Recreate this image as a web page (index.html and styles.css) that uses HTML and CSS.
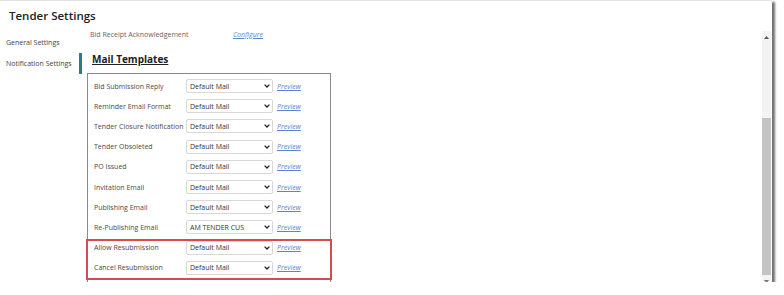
FILE: index.html
```html
<!DOCTYPE html>
<html lang="en">
<head>
    <meta charset="UTF-8">
    <title>Tender Settings</title>
    <link rel="stylesheet" href="styles.css">
</head>
<body>
    <div class="frame">
        <h1 class="title">Tender Settings</h1>
        <div class="main">
            <div class="sidebar">
                <div class="nav-item">General Settings</div>
                <div class="nav-item active">Notification Settings</div>
            </div>

            <div class="pane">
                <div class="receipt">
                    <span class="receipt-label">Bid Receipt Acknowledgement</span>
                    <a class="link" href="#">Configure</a>
                </div>

                <h2 class="section-title">Mail Templates</h2>

                <div class="templates">
                    <div class="row">
                        <span class="label">Bid Submission Reply</span>
                        <div class="select"><span>Default Mail</span><svg width="6" height="4" viewBox="0 0 6 4"><path d="M0.6 0.6 L3 3 L5.4 0.6" fill="none" stroke="#222" stroke-width="1.3"/></svg></div>
                        <a class="link" href="#">Preview</a>
                    </div>
                    <div class="row">
                        <span class="label">Reminder Email Format</span>
                        <div class="select"><span>Default Mail</span><svg width="6" height="4" viewBox="0 0 6 4"><path d="M0.6 0.6 L3 3 L5.4 0.6" fill="none" stroke="#222" stroke-width="1.3"/></svg></div>
                        <a class="link" href="#">Preview</a>
                    </div>
                    <div class="row">
                        <span class="label">Tender Closure Notification</span>
                        <div class="select"><span>Default Mail</span><svg width="6" height="4" viewBox="0 0 6 4"><path d="M0.6 0.6 L3 3 L5.4 0.6" fill="none" stroke="#222" stroke-width="1.3"/></svg></div>
                        <a class="link" href="#">Preview</a>
                    </div>
                    <div class="row">
                        <span class="label">Tender Obsoleted</span>
                        <div class="select"><span>Default Mail</span><svg width="6" height="4" viewBox="0 0 6 4"><path d="M0.6 0.6 L3 3 L5.4 0.6" fill="none" stroke="#222" stroke-width="1.3"/></svg></div>
                        <a class="link" href="#">Preview</a>
                    </div>
                    <div class="row">
                        <span class="label">PO Issued</span>
                        <div class="select"><span>Default Mail</span><svg width="6" height="4" viewBox="0 0 6 4"><path d="M0.6 0.6 L3 3 L5.4 0.6" fill="none" stroke="#222" stroke-width="1.3"/></svg></div>
                        <a class="link" href="#">Preview</a>
                    </div>
                    <div class="row">
                        <span class="label">Invitation Email</span>
                        <div class="select"><span>Default Mail</span><svg width="6" height="4" viewBox="0 0 6 4"><path d="M0.6 0.6 L3 3 L5.4 0.6" fill="none" stroke="#222" stroke-width="1.3"/></svg></div>
                        <a class="link" href="#">Preview</a>
                    </div>
                    <div class="row">
                        <span class="label">Publishing Email</span>
                        <div class="select"><span>Default Mail</span><svg width="6" height="4" viewBox="0 0 6 4"><path d="M0.6 0.6 L3 3 L5.4 0.6" fill="none" stroke="#222" stroke-width="1.3"/></svg></div>
                        <a class="link" href="#">Preview</a>
                    </div>
                    <div class="row">
                        <span class="label">Re-Publishing Email</span>
                        <div class="select"><span>AM TENDER CUS</span><svg width="6" height="4" viewBox="0 0 6 4"><path d="M0.6 0.6 L3 3 L5.4 0.6" fill="none" stroke="#222" stroke-width="1.3"/></svg></div>
                        <a class="link" href="#">Preview</a>
                    </div>

                    <!-- rows marked in red on the screenshot -->
                    <div class="highlight">
                        <div class="row">
                            <span class="label">Allow Resubmission</span>
                            <div class="select"><span>Default Mail</span><svg width="6" height="4" viewBox="0 0 6 4"><path d="M0.6 0.6 L3 3 L5.4 0.6" fill="none" stroke="#222" stroke-width="1.3"/></svg></div>
                            <a class="link" href="#">Preview</a>
                        </div>
                        <div class="row">
                            <span class="label">Cancel Resubmission</span>
                            <div class="select"><span>Default Mail</span><svg width="6" height="4" viewBox="0 0 6 4"><path d="M0.6 0.6 L3 3 L5.4 0.6" fill="none" stroke="#222" stroke-width="1.3"/></svg></div>
                            <a class="link" href="#">Preview</a>
                        </div>
                    </div>
                    <div class="row"></div>
                </div>
            </div>

            <div class="scrollbar">
                <div class="sb-arrow"><svg width="5" height="3" viewBox="0 0 5 3"><polygon points="0,3 2.5,0 5,3" fill="#555"/></svg></div>
                <div class="sb-track"><div class="sb-thumb"></div></div>
                <div class="sb-arrow"><svg width="5" height="3" viewBox="0 0 5 3"><polygon points="0,0 2.5,3 5,0" fill="#777"/></svg></div>
            </div>
        </div>
    </div>
</body>
</html>
```

FILE: styles.css
```css
body {
    margin: 0;
    background-color: #fff;
    font-family: "Open Sans", "Liberation Sans", sans-serif;
    color: #333;
}

.frame {
    width: 772px;
    height: 282px;
    border-top: 1px solid #e2e2e2;
    box-sizing: border-box;
    background-color: #fff;
    box-shadow: 3px 2px 2px rgba(0, 0, 0, 0.55);
    overflow: hidden;
    display: flex;
    flex-direction: column;
}

.title {
    margin: 0;
    height: 30px;
    box-sizing: border-box;
    padding: 8px 0 0 9px;
    font-size: 11.5px;
    line-height: 14px;
    font-weight: 600;
    color: #222;
    flex: none;
}

.main {
    flex: 1;
    display: flex;
    min-height: 0;
}

/* left menu */
.sidebar {
    width: 82px;
    flex: none;
    padding-top: 1px;
}

.nav-item {
    height: 21px;
    line-height: 21px;
    padding-left: 6px;
    font-size: 7px;
    color: #444;
    white-space: nowrap;
}

.nav-item.active {
    border-right: 3px solid #2d8077;
}

/* scrolled content */
.pane {
    flex: 1;
    overflow: hidden;
    min-width: 0;
}

.receipt {
    display: flex;
    align-items: center;
    height: 12px;
    margin-top: -3px;
    padding-left: 8px;
    font-size: 7px;
    color: #666;
}

.receipt-label {
    width: 139px;
}

.section-title {
    margin: 11px 0 0 10px;
    font-size: 10px;
    line-height: 16px;
    font-weight: 700;
    color: #222;
    text-decoration: underline;
    text-underline-offset: 1px;
}

.templates {
    width: 244px;
    box-sizing: border-box;
    margin: 6px 0 0 5px;
    padding-top: 2px;
    border: 1px solid #8a8a8a;
    border-bottom: none;
}

.row {
    display: flex;
    align-items: center;
    height: 20.2px;
    padding-left: 6px;
}

.label {
    width: 92px;
    flex: none;
    font-size: 7px;
    color: #4a4a4a;
    white-space: nowrap;
}

.select {
    width: 87px;
    height: 14px;
    box-sizing: border-box;
    border: 1px solid #d8d8d8;
    border-radius: 2px;
    display: flex;
    align-items: center;
    justify-content: space-between;
    padding: 0 2px 0 3px;
    font-size: 7px;
    color: #333;
    background-color: #fff;
}

.link {
    margin-left: 4px;
    font-size: 7px;
    font-style: italic;
    color: #5b84d1;
    text-decoration: underline;
}

.highlight {
    position: relative;
}

.highlight::after {
    content: "";
    position: absolute;
    top: 1px;
    bottom: -2px;
    left: -2px;
    right: -2px;
    border: 2px solid #d64b4b;
}

/* fake scrollbar */
.scrollbar {
    width: 9px;
    flex: none;
    margin-right: 1px;
    background-color: #f3f3f3;
    display: flex;
    flex-direction: column;
}

.sb-arrow {
    height: 12px;
    display: flex;
    align-items: center;
    justify-content: center;
    flex: none;
}

.sb-track {
    flex: 1;
    padding-top: 75px;
}

.sb-thumb {
    height: 157px;
    background-color: #c4c4c4;
}
```
